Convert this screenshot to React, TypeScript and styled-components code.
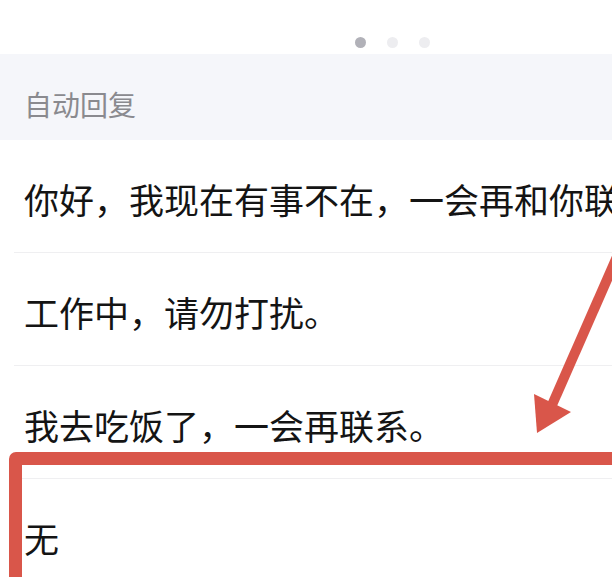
import React from "react";
import styled, { createGlobalStyle } from "styled-components";

const GlobalStyle = createGlobalStyle`
  html, body {
    margin: 0;
    padding: 0;
    background: #ffffff;
    overflow: hidden;
  }
  body {
    font-family: "Noto Sans CJK SC", "Noto Sans", sans-serif;
  }
`;

const Page = styled.div`
  position: relative;
  width: 612px;
  height: 577px;
  overflow: hidden;
  background: #ffffff;
`;

const Pager = styled.div`
  height: 54px;
  display: flex;
  justify-content: center;
  align-items: flex-end;
  gap: 21px;
  padding-left: 172px;
  box-sizing: border-box;
  padding-bottom: 6px;
`;

const Dot = styled.span<{ $active?: boolean }>`
  width: 11px;
  height: 11px;
  border-radius: 50%;
  background: ${(p) => (p.$active ? "#b1b1b8" : "#ededf0")};
`;

const SectionHeader = styled.div`
  height: 86px;
  background: #f5f6fa;
  display: flex;
  align-items: center;
  padding: 14px 0 0 24px;
  box-sizing: border-box;
  font-size: 28px;
  color: #8a8a8f;
`;

const Row = styled.div`
  height: 113px;
  margin-left: 14px;
  padding: 4px 0 0 10px;
  display: flex;
  align-items: center;
  border-bottom: 1px solid #efeff1;
  box-sizing: border-box;
  font-size: 35px;
  color: #141414;
  white-space: nowrap;
`;

const Highlight = styled.div`
  position: absolute;
  left: 9px;
  top: 452px;
  width: 640px;
  height: 160px;
  border: 13px solid #d9564a;
  border-radius: 7px;
  box-sizing: border-box;
  pointer-events: none;
`;

const Arrow = styled.svg`
  position: absolute;
  left: 0;
  top: 0;
  pointer-events: none;
`;

const replies = [
  "你好，我现在有事不在，一会再和你联系。",
  "工作中，请勿打扰。",
  "我去吃饭了，一会再联系。",
  "无",
];

export default function App() {
  return (
    <Page>
      <GlobalStyle />
      <Pager>
        <Dot $active />
        <Dot />
        <Dot />
      </Pager>
      <SectionHeader>自动回复</SectionHeader>
      {replies.map((text) => (
        <Row key={text}>{text}</Row>
      ))}
      <Highlight />
      <Arrow width="612" height="577" viewBox="0 0 612 577">
        <line x1="620" y1="250" x2="552" y2="405" stroke="#d9564a" strokeWidth="10" />
        <polygon points="537,433 534,394 571,412" fill="#d9564a" />
      </Arrow>
    </Page>
  );
}
